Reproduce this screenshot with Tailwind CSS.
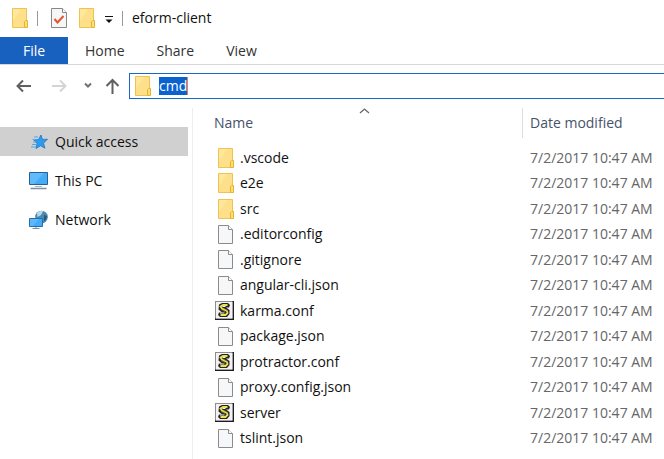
<!DOCTYPE html>
<html lang="en">
<head>
<meta charset="utf-8">
<title>eform-client</title>
<script src="https://cdn.jsdelivr.net/npm/@tailwindcss/browser@4"></script>
</head>
<body class="min-h-screen flex flex-col overflow-hidden bg-white font-['Open_Sans','Noto_Sans',sans-serif] text-sm text-[#111]">
<svg class="hidden" aria-hidden="true">
  <symbol id="folder" viewBox="0 0 17 20">
    <path d="M.5.5H14.500V19.500H.5Z" fill="#ffe08a" stroke="#efc350"/>
    <path d="M1 1h8L1 13Z" fill="#ffe79d"/>
    <path d="M13.500 12.500h2v7h-3v-6z" fill="#ffdd73" stroke="#e3b432"/>
  </symbol>
  <symbol id="page" viewBox="0 0 15 19">
    <path d="M.5.5H10.500L14.500 4.500V18.500H.5Z" fill="#f6f7f8" stroke="#8b8b8b"/>
    <path d="M10.500.5v4h4" fill="#fff" stroke="#8b8b8b"/>
  </symbol>
  <symbol id="script" viewBox="0 0 19 19">
    <path d="M0 0h19v19H0z" fill="#8d8d90"/>
    <path d="M17.500 0H19v19H0v-1.500h17.500z" fill="#1d1d22"/>
    <path d="M1 1h16.500v16.500H1z" fill="#f2f2f5"/>
    <path d="M4 3.500l3-1.500h6l2 2-1 2.500h-3l3.500 2.500v4L12 16H5l-2-2 1-2.500h3L3.500 8.500Z" fill="#25251c"/>
    <path d="M12.500 4H8L5.500 5.500 7 7.500l5 2.500.500 2-2 2H5.500" fill="none" stroke="#e9e058" stroke-width="1.800"/>
    <path d="M7.500 5.500h3M5 12h4.500" stroke="#f2f2f5"/>
    <path d="M9 7.500l3.500 2M6 8.500l4 2" stroke="#8d8735" stroke-width=".7"/>
  </symbol>
</svg>

<header class="flex h-[37px] shrink-0 items-center pb-px pl-3">
  <svg class="h-5 w-[17px]"><use href="#folder"/></svg>
  <span class="ml-2 h-[15px] w-px bg-[#999]"></span>
  <svg class="ml-[13px] h-5 w-4" viewBox="0 0 16 20"><path d="M.5.5H11.500L15.500 4.500V19.500H.5Z" fill="#f5f6f7" stroke="#888"/><path d="M11.500.5v4h4" fill="#fff" stroke="#888"/><path d="M3.500 11l3 3.500L12.500 8" fill="none" stroke="#e8522a" stroke-width="2"/></svg>
  <svg class="ml-3 h-5 w-[17px]"><use href="#folder"/></svg>
  <button class="ml-2" aria-label="Customize Quick Access Toolbar"><svg class="h-5 w-[10px]" viewBox="0 0 10 20"><path d="M1 8.500h8" stroke="#111"/><path d="M1.500 11.500h7L5 15Z" fill="#111"/></svg></button>
  <span class="ml-2 h-[15px] w-px bg-[#999]"></span>
  <h1 class="ml-[9px]">eform-client</h1>
</header>

<nav class="flex h-7 shrink-0 items-stretch gap-8 border-b border-[#d8d8d8] text-[#333]">
  <button class="mr-[-15px] w-[68px] bg-[#1961bf] text-white">File</button>
  <button>Home</button>
  <button>Share</button>
  <button>View</button>
</nav>

<div class="flex h-[43px] shrink-0 items-center pb-[2px] pl-4">
  <button aria-label="Back"><svg class="h-4 w-[15px]" viewBox="0 0 15 16" fill="none" stroke="#606060" stroke-width="2"><path d="M1 8h14M7 2.500L1.500 8 7 13.500"/></svg></button>
  <button class="ml-[21px]" aria-label="Forward"><svg class="h-4 w-[15px]" viewBox="0 0 15 16" fill="none" stroke="#d4d4d4" stroke-width="2"><path d="M0 8h14M8 2.500L13.500 8 8 13.500"/></svg></button>
  <button class="ml-[17px]" aria-label="Recent locations"><svg class="h-4 w-2" viewBox="0 0 8 16" fill="none" stroke="#707070" stroke-width="2"><path d="M1 5.500l3 3 3-3"/></svg></button>
  <button class="ml-[13px]" aria-label="Up"><svg class="h-4 w-[15px]" viewBox="0 0 15 16" fill="none" stroke="#606060" stroke-width="2"><path d="M7.500 16V2M1.500 8l6-6 6 6"/></svg></button>
  <div class="ml-[9px] flex h-[26px] flex-1 items-center border border-r-0 border-[#1a66cc] pl-[5px]">
    <svg class="h-5 w-[17px]"><use href="#folder"/></svg>
    <input aria-label="Address" value="cmd" class="ml-[7px] h-[18px] field-sizing-content border-r border-[#f08050] bg-[#0a62d0] leading-[18px] text-white outline-none">
  </div>
</div>

<div class="flex flex-1">
  <aside class="w-[193px] shrink-0 border-r border-[#eee] pt-[19px]">
    <ul class="flex flex-col gap-[10px] pr-[4px]">
      <li><a href="#" class="flex h-[29px] items-center gap-[7px] bg-[#d0d0d0] pl-[29px]">
        <svg class="h-[18px] w-[19px]" viewBox="0 0 19 18"><path d="M12 2l1.500 4.500 5-.3-4 4 1.500 5-4.500-2.500L7 15.500 8 10.500 5 7l4.500-.4Z" fill="#2b9bf0" stroke="#2476c0" stroke-width=".8"/><path d="M5 4h4M3.500 6.500h4M4 9h3M3 11.500h4M2 14h5" stroke="#55a7e2"/></svg>
        Quick access</a></li>
      <li><a href="#" class="flex h-[29px] items-center gap-[7px] pl-[29px]">
        <svg class="h-[19px] w-[19px]" viewBox="0 0 19 19"><path d="M.5 1.500h18v12H.5z" fill="#43abf8" stroke="#2a5f8e"/><path d="M1 2h14L5 13H1z" fill="#70c3ff" opacity=".65"/><path d="M6 15.500h7" stroke="#9fb4c4"/><path d="M1.500 17.500h16" stroke="#7890a3" stroke-width="1.500"/></svg>
        This PC</a></li>
      <li><a href="#" class="flex h-[29px] items-center gap-[7px] pl-[29px]">
        <svg class="h-5 w-[19px]" viewBox="0 0 19 20"><circle cx="12.500" cy="7" r="6.300" fill="#4d89ae"/><path d="M8 3c2-2 5-2.500 6-1.500L12 5 8.500 7Z" fill="#b5dbe6"/><path d="M15 5l3 1-1 4-2 1Z" fill="#27597f"/><path d="M.5 8.500h13v8H.5z" fill="#43abf8" stroke="#2a6da6"/><path d="M1 9h9l-6 7H1z" fill="#70c3ff" opacity=".6"/><path d="M7 17v1.500M3.500 18.500h7" stroke="#7890a3"/></svg>
        Network</a></li>
    </ul>
  </aside>

  <main class="relative min-w-0 flex-1">
    <svg class="absolute top-0 left-[166px] h-[6px] w-[11px]" viewBox="0 0 11 6" fill="none" stroke="#666" stroke-width="1.300"><path d="M1 5l4.500-4L10 5"/></svg>
    <table class="h-[343px] w-full table-fixed">
      <thead>
        <tr class="h-[37px] text-left text-[#46526b]">
          <th class="w-[329px] p-0 pl-[21px] align-top font-normal"><div class="flex h-[30px] items-center">Name</div></th>
          <th class="p-0 align-top font-normal"><div class="flex h-[30px] items-center border-l border-[#ddd] pl-[7px]">Date modified</div></th>
        </tr>
      </thead>
      <tbody id="files"></tbody>
    </table>
  </main>
</div>

<template id="row">
  <tr>
    <td class="p-0 pl-[22px]"><div class="flex items-center"><span class="flex w-[25px]"></span><a href="#"></a></div></td>
    <td class="p-0 pl-2 text-[#666]"></td>
  </tr>
</template>
<template id="icon-folder"><svg class="ml-[3px] h-5 w-[17px]"><use href="#folder"/></svg></template>
<template id="icon-page"><svg class="ml-[3px] h-[19px] w-[15px]"><use href="#page"/></svg></template>
<template id="icon-script"><svg class="h-[19px] w-[19px]"><use href="#script"/></svg></template>
<script>
const files = [
  ['folder', '.vscode'], ['folder', 'e2e'], ['folder', 'src'],
  ['page', '.editorconfig'], ['page', '.gitignore'], ['page', 'angular-cli.json'],
  ['script', 'karma.conf'], ['page', 'package.json'], ['script', 'protractor.conf'],
  ['page', 'proxy.config.json'], ['script', 'server'], ['page', 'tslint.json']
];
for (const [icon, name] of files) {
  const row = document.getElementById('row').content.cloneNode(true);
  row.querySelector('span').append(document.getElementById('icon-' + icon).content.cloneNode(true));
  row.querySelector('a').textContent = name;
  row.querySelectorAll('td')[1].textContent = '7/2/2017 10:47 AM';
  document.getElementById('files').append(row);
}
</script>
</body>
</html>
